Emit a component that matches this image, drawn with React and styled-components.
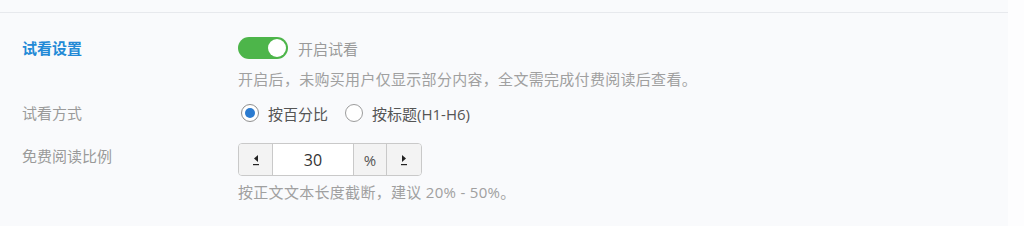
import { useState } from "react";
import styled, { createGlobalStyle } from "styled-components";

const GlobalStyle = createGlobalStyle`
  html, body {
    margin: 0;
    padding: 0;
    background: #fdfdfe;
  }
  body {
    font-family: "Open Sans", "Noto Sans CJK SC", sans-serif;
    font-size: 15px;
  }
`;

const Page = styled.div`
  display: flex;
  width: 1024px;
  height: 226px;
  overflow: hidden;
`;

const Panel = styled.div`
  width: 1008px;
  background: #f9fafc;
`;

const SideStrip = styled.div`
  flex: 1;
  background: #fdfdfe;
`;

const PanelTop = styled.div`
  height: 12px;
  border-bottom: 1px solid #e7e9ed;
`;

const Form = styled.div`
  padding: 24px 0 0 22px;
`;

const FormRow = styled.div`
  display: grid;
  grid-template-columns: 216px 1fr;
  margin-top: ${(p) => p.gap || 0}px;
`;

const Label = styled.div`
  line-height: 22px;
  padding-top: ${(p) => p.offset || 0}px;
  color: ${(p) => (p.active ? "#2289d6" : "#9a9a9a")};
  font-weight: ${(p) => (p.active ? 700 : 400)};
`;

const Control = styled.div`
  display: flex;
  flex-direction: column;
  align-items: flex-start;
`;

const Line = styled.div`
  display: flex;
  align-items: center;
  height: 22px;
`;

const Toggle = styled.button`
  position: relative;
  width: 50px;
  height: 22px;
  border: none;
  padding: 0;
  border-radius: 11px;
  background: ${(p) => (p.on ? "#4db54a" : "#cfcfcf")};
  cursor: pointer;
  &::after {
    content: "";
    position: absolute;
    top: 2px;
    left: ${(p) => (p.on ? "30px" : "2px")};
    width: 18px;
    height: 18px;
    border-radius: 50%;
    background: #fff;
    transition: left 0.2s;
  }
`;

const ToggleText = styled.span`
  margin-left: 10px;
  color: #9a9a9a;
`;

const Hint = styled.div`
  line-height: 20px;
  margin-top: ${(p) => p.gap || 0}px;
  color: #a0a0a0;
  letter-spacing: ${(p) => p.spacing || 0}px;
`;

const RadioGroup = styled.div`
  display: flex;
  align-items: center;
  height: 22px;
  gap: 14px;
`;

const RadioOption = styled.label`
  display: flex;
  align-items: center;
  color: #555;
  cursor: pointer;
`;

const RadioDot = styled.span`
  position: relative;
  width: 16px;
  height: 16px;
  border-radius: 50%;
  border: 1px solid ${(p) => (p.checked ? "#8f8f8f" : "#9c9c9c")};
  background: #fff;
  margin: 0 9px 0 3px;
  &::after {
    content: "";
    display: ${(p) => (p.checked ? "block" : "none")};
    position: absolute;
    top: 3px;
    left: 3px;
    width: 10px;
    height: 10px;
    border-radius: 50%;
    background: #2b7bd0;
  }
`;

const Stepper = styled.div`
  display: flex;
  height: 33px;
  border: 1px solid #c9c9c9;
  border-radius: 4px;
  overflow: hidden;
  box-sizing: border-box;
`;

const StepButton = styled.button`
  width: ${(p) => p.w}px;
  border: none;
  padding: 0;
  background: #f3f3f3;
  display: flex;
  align-items: center;
  justify-content: center;
  cursor: pointer;
`;

const StepInput = styled.input`
  width: 80px;
  border: none;
  border-left: 1px solid #c9c9c9;
  border-right: 1px solid #c9c9c9;
  padding: 0;
  text-align: center;
  font-family: "Open Sans", "Noto Sans CJK SC", sans-serif;
  font-size: 16px;
  color: #333;
  background: #fff;
  outline: none;
`;

const Addon = styled.div`
  width: 32px;
  background: #f3f3f3;
  border-right: 1px solid #c9c9c9;
  display: flex;
  align-items: center;
  justify-content: center;
  color: #555;
  font-size: 15px;
`;

const Arrow = ({ dir }) => (
  <svg width="8" height="12" viewBox="0 0 8 12">
    {dir === "left" ? (
      <polygon points="6,1 6,8 2,4.5" fill="#222" />
    ) : (
      <polygon points="2,1 2,8 6,4.5" fill="#222" />
    )}
    <rect x="1" y="10" width="6" height="1.2" fill="#222" />
  </svg>
);

export default function App() {
  const [on, setOn] = useState(true);
  const [mode, setMode] = useState("percent");
  const [ratio, setRatio] = useState(30);

  return (
    <Page>
      <GlobalStyle />
      <Panel>
        <PanelTop />
        <Form>
          <FormRow>
            <Label active>试看设置</Label>
            <Control>
              <Line>
                <Toggle on={on} onClick={() => setOn(!on)} />
                <ToggleText>开启试看</ToggleText>
              </Line>
              <Hint gap={10} spacing={0.3}>
                开启后，未购买用户仅显示部分内容，全文需完成付费阅读后查看。
              </Hint>
            </Control>
          </FormRow>
          <FormRow gap={13}>
            <Label>试看方式</Label>
            <RadioGroup>
              <RadioOption onClick={() => setMode("percent")}>
                <RadioDot checked={mode === "percent"} />
                按百分比
              </RadioOption>
              <RadioOption onClick={() => setMode("heading")}>
                <RadioDot checked={mode === "heading"} />
                按标题(H1-H6)
              </RadioOption>
            </RadioGroup>
          </FormRow>
          <FormRow gap={19}>
            <Label offset={2}>免费阅读比例</Label>
            <Control>
              <Stepper>
                <StepButton w={33} onClick={() => setRatio(Math.max(0, ratio - 1))}>
                  <Arrow dir="left" />
                </StepButton>
                <StepInput
                  value={ratio}
                  onChange={(e) => setRatio(e.target.value)}
                />
                <Addon>%</Addon>
                <StepButton w={34} onClick={() => setRatio(Math.min(100, ratio + 1))}>
                  <Arrow dir="right" />
                </StepButton>
              </Stepper>
              <Hint gap={6} spacing={0.3}>按正文文本长度截断，建议 20% - 50%。</Hint>
            </Control>
          </FormRow>
        </Form>
      </Panel>
      <SideStrip />
    </Page>
  );
}
